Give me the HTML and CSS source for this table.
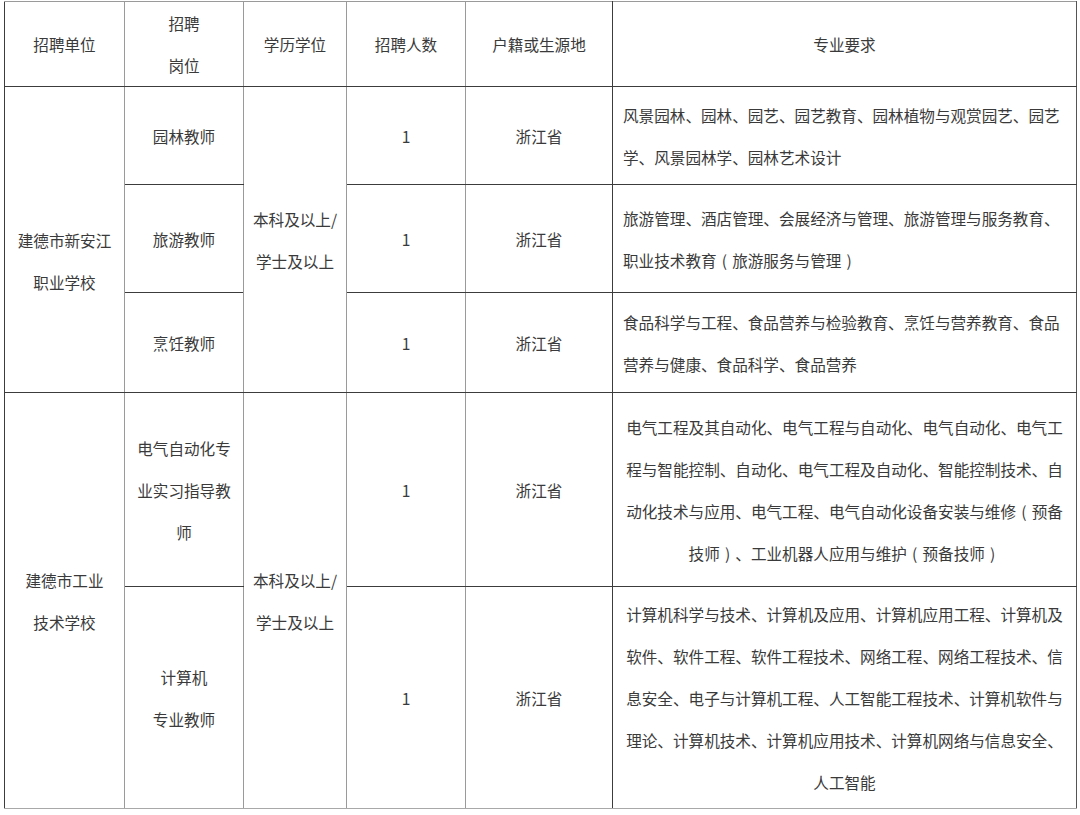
FILE: index.html
```html
<!DOCTYPE html>
<html lang="zh-CN">
<head>
<meta charset="utf-8">
<title>招聘岗位</title>
<link rel="stylesheet" href="styles.css">
</head>
<body>
<table class="tbl">
  <colgroup>
    <col class="c1"><col class="c2"><col class="c3"><col class="c4"><col class="c5"><col class="c6">
  </colgroup>
  <tr class="rh">
    <td class="k1">招聘单位</td>
    <td class="k2">招聘<br>岗位</td>
    <td class="k3">学历学位</td>
    <td class="k4">招聘人数</td>
    <td class="k5">户籍或生源地</td>
    <td class="k6">专业要求</td>
  </tr>
  <tr class="r1">
    <td class="k1 shift" rowspan="3">建德市新安江<br>职业学校</td>
    <td class="k2">园林教师</td>
    <td class="k3" rowspan="3">本科及以上/<br>学士及以上</td>
    <td class="k4">1</td>
    <td class="k5">浙江省</td>
    <td class="k6 left">风景园林、园林、园艺、园艺教育、园林植物与观赏园艺、园艺学、风景园林学、园林艺术设计</td>
  </tr>
  <tr class="r2">
    <td class="k2">旅游教师</td>
    <td class="k4">1</td>
    <td class="k5">浙江省</td>
    <td class="k6 left">旅游管理、酒店管理、会展经济与管理、旅游管理与服务教育、职业技术教育<span class="p">(</span>旅游服务与管理<span class="p">)</span></td>
  </tr>
  <tr class="r3">
    <td class="k2">烹饪教师</td>
    <td class="k4">1</td>
    <td class="k5">浙江省</td>
    <td class="k6 left">食品科学与工程、食品营养与检验教育、烹饪与营养教育、食品营养与健康、食品科学、食品营养</td>
  </tr>
  <tr class="r4">
    <td class="k1 last" rowspan="2">建德市工业<br>技术学校</td>
    <td class="k2">电气自动化专业实习指导教师</td>
    <td class="k3 last" rowspan="2">本科及以上/<br>学士及以上</td>
    <td class="k4">1</td>
    <td class="k5">浙江省</td>
    <td class="k6">电气工程及其自动化、电气工程与自动化、电气自动化、电气工程与智能控制、自动化、电气工程及自动化、智能控制技术、自动化技术与应用、电气工程、电气自动化设备安装与维修<span class="p">(</span>预备技师<span class="p">)</span>、工业机器人应用与维护<span class="p">(</span>预备技师<span class="p">)</span></td>
  </tr>
  <tr class="r5">
    <td class="k2 last">计算机<br>专业教师</td>
    <td class="k4 last">1</td>
    <td class="k5 last">浙江省</td>
    <td class="k6 last">计算机科学与技术、计算机及应用、计算机应用工程、计算机及软件、软件工程、软件工程技术、网络工程、网络工程技术、信息安全、电子与计算机工程、人工智能工程技术、计算机软件与理论、计算机技术、计算机应用技术、计算机网络与信息安全、人工智能</td>
  </tr>
</table>
</body>
</html>
```

FILE: styles.css
```css
html, body {
  margin: 0;
  padding: 0;
  background: #ffffff;
}

body {
  padding: 1px 0 0 4px;
  font-family: "Noto Sans CJK SC", "Noto Sans", sans-serif;
  font-size: 15.6px;
  color: #3a3a3a;
}

.tbl {
  border-collapse: collapse;
  table-layout: fixed;
  width: 1072px;
  line-height: 42px;
}

.c1 { width: 120px; }
.c2 { width: 119px; }
.c3 { width: 103px; }
.c4 { width: 119px; }
.c5 { width: 147px; }
.c6 { width: 464px; }

.tbl td {
  border-top: 1px solid #3c3c3c;
  border-bottom: 1px solid #3c3c3c;
  border-left: 1px solid #9a9a9a;
  border-right: 1px solid #9a9a9a;
  padding: 0 10px;
  text-align: center;
  vertical-align: middle;
  word-break: break-all;
}

.tbl td.k3 { padding: 0 2px; }

.tbl td.k1 { border-left-color: #3c3c3c; }
.tbl td.k5 { border-left-color: #4a4a4a; border-right-color: #3c3c3c; }
.tbl td.k6 { border-right-color: #555555; }

.tbl .rh td { border-top-color: #9a9a9a; }
.tbl td.last { border-bottom-color: #a8a8a8; }

.tbl td.left { text-align: left; }
.tbl td.shift { padding-top: 42px; }

.p {
  display: inline-block;
  width: 1em;
  text-align: center;
}

.rh { height: 84px; }
.r1 { height: 98px; }
.r2 { height: 108px; }
.r3 { height: 100px; }
.r4 { height: 194px; }
.r5 { height: 222px; }
```
